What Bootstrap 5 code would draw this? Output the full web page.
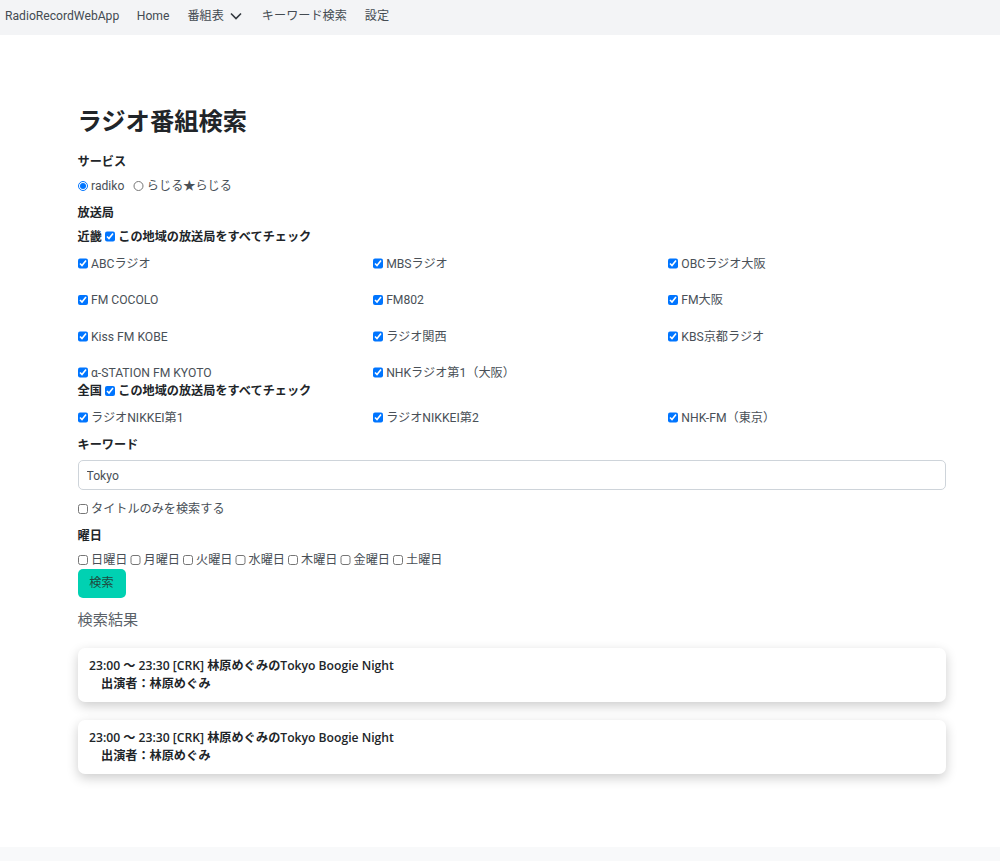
<!DOCTYPE html>
<html lang="ja">
<head>
<meta charset="utf-8">
<title>RadioRecordWebApp</title>
<link href="https://cdn.jsdelivr.net/npm/bootstrap@5.3.0/dist/css/bootstrap.min.css" rel="stylesheet">
<style>
html,body{height:861px;overflow:hidden}
body{font-family:Roboto,"Noto Sans CJK JP",sans-serif;font-size:12.15px;line-height:18.2px;color:#212529;background:#fff;display:flex;flex-direction:column}
.top{height:35px;background:#f3f4f6;padding:0 5px 2px;flex:none;flex-wrap:nowrap;justify-content:flex-start}
.top .navbar-brand{font-size:12.15px;color:#444b52;margin-right:17.5px;padding:0}
.navbar-expand.top .navbar-nav .nav-link{font-size:12.15px;color:#444b52;padding:0;margin-right:18px;display:flex;align-items:center;gap:6px}
.top .nav-link svg{width:12px;height:12px;margin-right:2px}
main{flex:1;padding:0 54px 0 77.5px}
h1.title{font-size:24.3px;font-weight:700;line-height:30px;margin:72px 0 16px;color:#212529}
.lab{font-weight:700;margin-bottom:0;display:block}
.lab1{margin-bottom:6px}
.opts{color:#495057;display:flex;gap:9px;margin-bottom:9px;align-items:center}
.pick{display:inline-flex;align-items:center;gap:3px;color:#495057}
input[type=checkbox],input[type=radio]{width:10.5px;height:10.5px;margin:0 0 1px;flex:none}
.area{font-weight:700;display:flex;gap:3px;align-items:center;height:18px}
.area.first{margin-top:-.5px}
.area .pick{color:#212529}
.stations{margin:8.5px -8.5px 0;--bs-gutter-x:17px;--bs-gutter-y:0}
.area.first+.stations{margin-top:9px}
.stations>div{height:36.3px;display:flex;align-items:flex-start}
.stations.last>div{height:18px}
.stations.tight>div:nth-last-child(-n+2){height:18.5px}
.kw{margin-top:8.5px;margin-bottom:6.5px}
.form-control.kwbox{height:30px;font-size:12.15px;border-color:#ced4da;border-radius:5px;padding:2px 8px 0;color:#495057}
.only{margin:10px 0 8px}
.days{display:flex;gap:2.6px;color:#495057}
.btn.go{background:#00d1b2;border:0;color:#1f4a40;width:48px;height:29.5px;padding:0;margin-top:-1px;font-size:12.15px;border-radius:5px;display:block}
h2.res{font-size:15.2px;font-weight:400;color:#5b6269;line-height:20px;margin:12px 0 18px}
.card.hit{border:0;border-radius:7px;box-shadow:0 4px 12px rgba(0,0,0,.2);padding:9px 11.5px;height:54px;margin-bottom:18px;font-family:"Open Sans","Noto Sans CJK JP",sans-serif;font-weight:600;color:#212529}
.card.hit div+div{padding-left:12px}
footer{height:14px;background:#f8f9fa;flex:none}
</style>
</head>
<body>
<nav class="navbar navbar-expand top">
  <a class="navbar-brand" href="#">RadioRecordWebApp</a>
  <ul class="navbar-nav flex-row">
    <li class="nav-item"><a class="nav-link" href="#">Home</a></li>
    <li class="nav-item"><a class="nav-link" href="#">番組表 <svg viewBox="0 0 12 12" fill="none" stroke="#33393f" stroke-width="1.6"><path d="M1 3.5l5 5 5-5"/></svg></a></li>
    <li class="nav-item"><a class="nav-link" href="#">キーワード検索</a></li>
    <li class="nav-item"><a class="nav-link" href="#">設定</a></li>
  </ul>
</nav>
<main>
  <h1 class="title">ラジオ番組検索</h1>
  <label class="lab lab1">サービス</label>
  <div class="opts">
    <label class="pick"><input type="radio" name="svc" checked>radiko</label>
    <label class="pick"><input type="radio" name="svc">らじる★らじる</label>
  </div>
  <label class="lab lab1">放送局</label>
  <div class="area first">近畿 <label class="pick"><input type="checkbox" checked>この地域の放送局をすべてチェック</label></div>
  <div class="row stations tight">
    <div class="col-4"><label class="pick"><input type="checkbox" checked>ABCラジオ</label></div>
    <div class="col-4"><label class="pick"><input type="checkbox" checked>MBSラジオ</label></div>
    <div class="col-4"><label class="pick"><input type="checkbox" checked>OBCラジオ大阪</label></div>
    <div class="col-4"><label class="pick"><input type="checkbox" checked>FM COCOLO</label></div>
    <div class="col-4"><label class="pick"><input type="checkbox" checked>FM802</label></div>
    <div class="col-4"><label class="pick"><input type="checkbox" checked>FM大阪</label></div>
    <div class="col-4"><label class="pick"><input type="checkbox" checked>Kiss FM KOBE</label></div>
    <div class="col-4"><label class="pick"><input type="checkbox" checked>ラジオ関西</label></div>
    <div class="col-4"><label class="pick"><input type="checkbox" checked>KBS京都ラジオ</label></div>
    <div class="col-4"><label class="pick"><input type="checkbox" checked>α-STATION FM KYOTO</label></div>
    <div class="col-4"><label class="pick"><input type="checkbox" checked>NHKラジオ第1（大阪）</label></div>
  </div>
  <div class="area">全国 <label class="pick"><input type="checkbox" checked>この地域の放送局をすべてチェック</label></div>
  <div class="row stations last">
    <div class="col-4"><label class="pick"><input type="checkbox" checked>ラジオNIKKEI第1</label></div>
    <div class="col-4"><label class="pick"><input type="checkbox" checked>ラジオNIKKEI第2</label></div>
    <div class="col-4"><label class="pick"><input type="checkbox" checked>NHK-FM（東京）</label></div>
  </div>
  <label class="lab kw">キーワード</label>
  <input type="text" class="form-control kwbox" value="Tokyo">
  <div class="only"><label class="pick"><input type="checkbox">タイトルのみを検索する</label></div>
  <label class="lab lab1">曜日</label>
  <div class="days">
    <label class="pick"><input type="checkbox">日曜日</label>
    <label class="pick"><input type="checkbox">月曜日</label>
    <label class="pick"><input type="checkbox">火曜日</label>
    <label class="pick"><input type="checkbox">水曜日</label>
    <label class="pick"><input type="checkbox">木曜日</label>
    <label class="pick"><input type="checkbox">金曜日</label>
    <label class="pick"><input type="checkbox">土曜日</label>
  </div>
  <button type="button" class="btn go">検索</button>
  <h2 class="res">検索結果</h2>
  <div class="card hit"><div>23:00 ～ 23:30 [CRK] 林原めぐみのTokyo Boogie Night</div><div>出演者：林原めぐみ</div></div>
  <div class="card hit"><div>23:00 ～ 23:30 [CRK] 林原めぐみのTokyo Boogie Night</div><div>出演者：林原めぐみ</div></div>
</main>
<footer></footer>
</body>
</html>
